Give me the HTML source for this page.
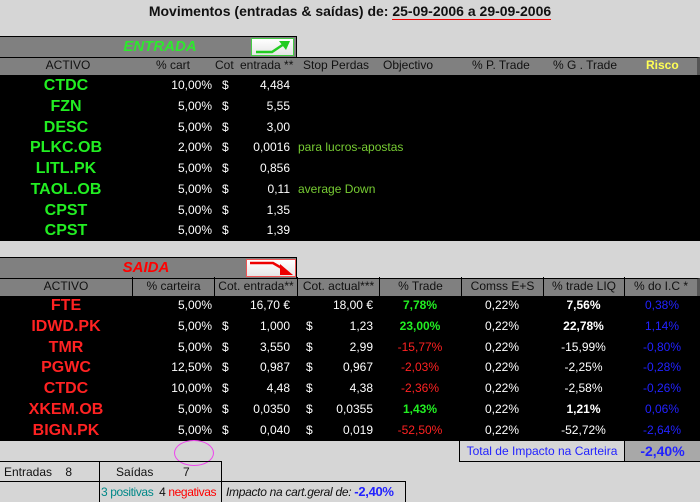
<!DOCTYPE html>
<html><head><meta charset="utf-8"><style>
html,body{margin:0;width:700px;height:502px;overflow:hidden}
body{background:#d6d6d6;position:relative;font-family:"Liberation Sans",Arial,sans-serif;font-size:12px}
div,span{position:absolute;box-sizing:border-box;white-space:nowrap}
.c{text-align:center}.r{text-align:right}
.t{font-weight:bold;font-size:16px;text-align:center;width:132px;left:0}
.b{font-weight:bold}
.row{left:0;width:700px;height:21px;line-height:21px}
.row span{top:0}
</style></head><body>
<div style="left:0;top:3px;width:700px;text-align:center;font-size:14px;font-weight:bold;color:#111">Movimentos (entradas &amp; saídas) de: <span style="position:relative;border-bottom:1px solid #e00">25-09-2006 a 29-09-2006</span></div>

<div style="left:0;top:36px;width:297px;height:21px;background:#808080;border-top:1px solid #000;border-right:1px solid #000"></div>
<div style="left:100px;top:37px;width:120px;font-size:15px;font-weight:bold;font-style:italic;color:#2ee82e;line-height:20px;text-align:center">ENTRADA</div>
<div style="left:251px;top:38px;width:43px;height:18px;background:linear-gradient(#fff,#e6e6e6);border:1px solid #4c4"><svg width="41" height="16" style="position:absolute;left:0;top:0"><path d="M4 13 H20 L32 5" stroke="#2c2" stroke-width="2.5" fill="none"/><path d="M27 2 L38 2 L34 11 Z" fill="#2c2"/></svg></div>
<div style="left:0;top:57px;width:700px;height:18px;background:#808080;border-top:1px solid #000;border-right:3px solid #555"></div>
<div class="row" style="top:56px;color:#111;line-height:19px">
<span class="c" style="left:20px;width:96px">ACTIVO</span><span class="c" style="left:148px;width:50px">% cart</span><span style="left:215px">Cot</span><span style="left:240px">entrada **</span><span style="left:303px">Stop Perdas</span><span style="left:383px">Objectivo</span><span style="left:472px">% P. Trade</span><span style="left:553px">% G . Trade</span><span style="left:646px;color:#ff5;font-weight:bold">Risco</span></div>
<div style="left:0;top:75px;width:700px;height:166px;background:#000"></div>
<div style="left:0;top:75px;width:700px;color:#fff">
<div class="row" style="top:0"><span class="t" style="color:#2e2">CTDC</span><span class="r" style="left:150px;width:62px">10,00%</span><span style="left:222px">$</span><span class="r" style="left:230px;width:60px">4,484</span></div>
<div class="row" style="top:21px"><span class="t" style="color:#2e2">FZN</span><span class="r" style="left:150px;width:62px">5,00%</span><span style="left:222px">$</span><span class="r" style="left:230px;width:60px">5,55</span></div>
<div class="row" style="top:42px"><span class="t" style="color:#2e2">DESC</span><span class="r" style="left:150px;width:62px">5,00%</span><span style="left:222px">$</span><span class="r" style="left:230px;width:60px">3,00</span></div>
<div class="row" style="top:62px"><span class="t" style="color:#2e2">PLKC.OB</span><span class="r" style="left:150px;width:62px">2,00%</span><span style="left:222px">$</span><span class="r" style="left:230px;width:60px">0,0016</span><span style="left:298px;color:#7c3">para lucros-apostas</span></div>
<div class="row" style="top:83px"><span class="t" style="color:#2e2">LITL.PK</span><span class="r" style="left:150px;width:62px">5,00%</span><span style="left:222px">$</span><span class="r" style="left:230px;width:60px">0,856</span></div>
<div class="row" style="top:104px"><span class="t" style="color:#2e2">TAOL.OB</span><span class="r" style="left:150px;width:62px">5,00%</span><span style="left:222px">$</span><span class="r" style="left:230px;width:60px">0,11</span><span style="left:298px;color:#7c3">average Down</span></div>
<div class="row" style="top:125px"><span class="t" style="color:#2e2">CPST</span><span class="r" style="left:150px;width:62px">5,00%</span><span style="left:222px">$</span><span class="r" style="left:230px;width:60px">1,35</span></div>
<div class="row" style="top:145px"><span class="t" style="color:#2e2">CPST</span><span class="r" style="left:150px;width:62px">5,00%</span><span style="left:222px">$</span><span class="r" style="left:230px;width:60px">1,39</span></div>
</div>

<div style="left:0;top:257px;width:297px;height:21px;background:#808080;border-top:1px solid #000;border-right:1px solid #000"></div>
<div style="left:100px;top:258px;width:92px;font-size:15px;font-weight:bold;font-style:italic;color:#f00;line-height:20px;text-align:center">SAIDA</div>
<div style="left:246px;top:259px;width:50px;height:18px;background:linear-gradient(#fff,#e6e6e6);border:1px solid #e55"><svg width="48" height="16" style="position:absolute;left:0;top:0"><path d="M3 3 H26 L38 10" stroke="#e00" stroke-width="2.5" fill="none"/><path d="M33 4 L46 15 L33 15 Z" fill="#e00"/></svg></div>
<div style="left:0;top:278px;width:700px;height:18px;background:#808080;border-top:1px solid #000;border-right:3px solid #555"></div>
<div class="row" style="top:277px;color:#111;line-height:19px">
<span class="c" style="left:0;width:132px">ACTIVO</span><span class="c" style="left:132px;width:82px;border-left:1px solid #000;height:19px">% carteira</span><span class="c" style="left:214px;width:83px;border-left:1px solid #000;height:19px">Cot. entrada**</span><span class="c" style="left:297px;width:82px;border-left:1px solid #000;height:19px">Cot. actual***</span><span class="c" style="left:379px;width:82px;border-left:1px solid #000;height:19px">% Trade</span><span class="c" style="left:461px;width:82px;border-left:1px solid #000;height:19px">Comss E+S</span><span class="c" style="left:543px;width:81px;border-left:1px solid #000;height:19px">% trade LIQ</span><span class="c" style="left:624px;width:73px;border-left:1px solid #000;height:19px">% do I.C *</span></div>
<div style="left:0;top:296px;width:700px;height:145px;background:#000"></div>
<div style="left:0;top:295px;width:700px;color:#fff">
<div class="row" style="top:0"><span class="t" style="color:#f22">FTE</span><span class="r" style="left:150px;width:62px">5,00%</span><span class="r" style="left:230px;width:60px">16,70 €</span><span class="r" style="left:300px;width:73px">18,00 €</span><span class="c b" style="left:379px;width:82px;color:#2e2">7,78%</span><span class="c" style="left:461px;width:82px">0,22%</span><span class="c b" style="left:543px;width:81px">7,56%</span><span class="c" style="left:624px;width:76px;color:#22f">0,38%</span></div>
<div class="row" style="top:21px"><span class="t" style="color:#f22">IDWD.PK</span><span class="r" style="left:150px;width:62px">5,00%</span><span style="left:222px">$</span><span class="r" style="left:230px;width:60px">1,000</span><span style="left:306px">$</span><span class="r" style="left:300px;width:73px">1,23</span><span class="c b" style="left:379px;width:82px;color:#2e2">23,00%</span><span class="c" style="left:461px;width:82px">0,22%</span><span class="c b" style="left:543px;width:81px">22,78%</span><span class="c" style="left:624px;width:76px;color:#22f">1,14%</span></div>
<div class="row" style="top:42px"><span class="t" style="color:#f22">TMR</span><span class="r" style="left:150px;width:62px">5,00%</span><span style="left:222px">$</span><span class="r" style="left:230px;width:60px">3,550</span><span style="left:306px">$</span><span class="r" style="left:300px;width:73px">2,99</span><span class="c" style="left:379px;width:82px;color:#f22">-15,77%</span><span class="c" style="left:461px;width:82px">0,22%</span><span class="c" style="left:543px;width:81px">-15,99%</span><span class="c" style="left:624px;width:76px;color:#22f">-0,80%</span></div>
<div class="row" style="top:62px"><span class="t" style="color:#f22">PGWC</span><span class="r" style="left:150px;width:62px">12,50%</span><span style="left:222px">$</span><span class="r" style="left:230px;width:60px">0,987</span><span style="left:306px">$</span><span class="r" style="left:300px;width:73px">0,967</span><span class="c" style="left:379px;width:82px;color:#f22">-2,03%</span><span class="c" style="left:461px;width:82px">0,22%</span><span class="c" style="left:543px;width:81px">-2,25%</span><span class="c" style="left:624px;width:76px;color:#22f">-0,28%</span></div>
<div class="row" style="top:83px"><span class="t" style="color:#f22">CTDC</span><span class="r" style="left:150px;width:62px">10,00%</span><span style="left:222px">$</span><span class="r" style="left:230px;width:60px">4,48</span><span style="left:306px">$</span><span class="r" style="left:300px;width:73px">4,38</span><span class="c" style="left:379px;width:82px;color:#f22">-2,36%</span><span class="c" style="left:461px;width:82px">0,22%</span><span class="c" style="left:543px;width:81px">-2,58%</span><span class="c" style="left:624px;width:76px;color:#22f">-0,26%</span></div>
<div class="row" style="top:104px"><span class="t" style="color:#f22">XKEM.OB</span><span class="r" style="left:150px;width:62px">5,00%</span><span style="left:222px">$</span><span class="r" style="left:230px;width:60px">0,0350</span><span style="left:306px">$</span><span class="r" style="left:300px;width:73px">0,0355</span><span class="c b" style="left:379px;width:82px;color:#2e2">1,43%</span><span class="c" style="left:461px;width:82px">0,22%</span><span class="c b" style="left:543px;width:81px">1,21%</span><span class="c" style="left:624px;width:76px;color:#22f">0,06%</span></div>
<div class="row" style="top:125px"><span class="t" style="color:#f22">BIGN.PK</span><span class="r" style="left:150px;width:62px">5,00%</span><span style="left:222px">$</span><span class="r" style="left:230px;width:60px">0,040</span><span style="left:306px">$</span><span class="r" style="left:300px;width:73px">0,019</span><span class="c" style="left:379px;width:82px;color:#f22">-52,50%</span><span class="c" style="left:461px;width:82px">0,22%</span><span class="c" style="left:543px;width:81px">-52,72%</span><span class="c" style="left:624px;width:76px;color:#22f">-2,64%</span></div>
</div>

<div style="left:174px;top:440px;width:40px;height:26px;border:1px solid #e4e;border-radius:50%"></div>
<div style="left:459px;top:441px;width:165px;height:21px;border-left:1px solid #000;border-bottom:1px solid #000;color:#22f;line-height:21px;text-align:center">Total de Impacto na Carteira</div>
<div style="left:624px;top:441px;width:76px;height:21px;background:#a8a8a8;border-left:1px solid #000;border-bottom:1px solid #000;color:#22f;font-weight:bold;font-size:14px;line-height:21px;text-align:center">-2,40%</div>

<div style="left:0;top:461px;width:222px;height:21px;border-top:1px solid #000;border-bottom:1px solid #000"></div>
<div style="left:99px;top:461px;width:123px;height:41px;border:1px solid #000;border-bottom:none"></div>
<div style="left:4px;top:462px;line-height:20px;color:#111">Entradas&nbsp;&nbsp;&nbsp;&nbsp;8</div>
<div style="left:116px;top:462px;line-height:20px;color:#111">Saídas</div>
<div style="left:183px;top:462px;line-height:20px;color:#111">7</div>
<div style="left:101px;top:482px;width:119px;line-height:20px;font-size:12px;letter-spacing:-0.4px;color:#111;overflow:hidden"><span style="position:static;color:#088">3 positivas</span> &nbsp;4 <span style="position:static;color:#f00">negativas</span></div>
<div style="left:222px;top:481px;width:184px;height:21px;border-top:1px solid #000;border-right:1px solid #000;line-height:20px;padding-left:4px;color:#111;letter-spacing:-0.3px;overflow:hidden"><i style="font-size:12px">Impacto na cart.geral de:</i> <b style="color:#22f;font-size:13px">-2,40%</b></div>
</body></html>
